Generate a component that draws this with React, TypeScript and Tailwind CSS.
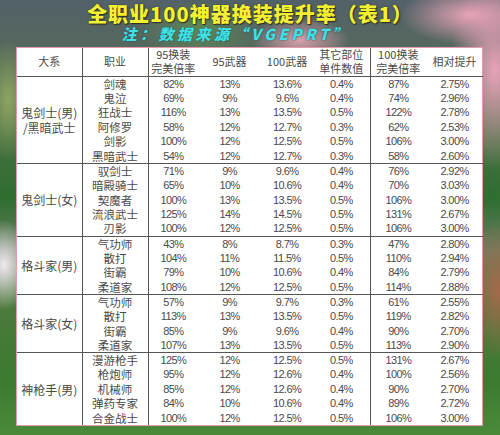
type Row = [string, string, string, string, string, string, string];

interface Group {
  label: string[];
  rows: Row[];
}

const groups: Group[] = [
  {
    label: ['鬼剑士(男)', '/黑暗武士'],
    rows: [
      ['剑魂', '82%', '13%', '13.6%', '0.4%', '87%', '2.75%'],
      ['鬼泣', '69%', '9%', '9.6%', '0.4%', '74%', '2.96%'],
      ['狂战士', '116%', '13%', '13.5%', '0.5%', '122%', '2.78%'],
      ['阿修罗', '58%', '12%', '12.7%', '0.3%', '62%', '2.53%'],
      ['剑影', '100%', '12%', '12.5%', '0.5%', '106%', '3.00%'],
      ['黑暗武士', '54%', '12%', '12.7%', '0.3%', '58%', '2.60%'],
    ],
  },
  {
    label: ['鬼剑士(女)'],
    rows: [
      ['驭剑士', '71%', '9%', '9.6%', '0.4%', '76%', '2.92%'],
      ['暗殿骑士', '65%', '10%', '10.6%', '0.4%', '70%', '3.03%'],
      ['契魔者', '100%', '13%', '13.5%', '0.5%', '106%', '3.00%'],
      ['流浪武士', '125%', '14%', '14.5%', '0.5%', '131%', '2.67%'],
      ['刃影', '100%', '12%', '12.5%', '0.5%', '106%', '3.00%'],
    ],
  },
  {
    label: ['格斗家(男)'],
    rows: [
      ['气功师', '43%', '8%', '8.7%', '0.3%', '47%', '2.80%'],
      ['散打', '104%', '11%', '11.5%', '0.5%', '110%', '2.94%'],
      ['街霸', '79%', '10%', '10.6%', '0.4%', '84%', '2.79%'],
      ['柔道家', '108%', '12%', '12.5%', '0.5%', '114%', '2.88%'],
    ],
  },
  {
    label: ['格斗家(女)'],
    rows: [
      ['气功师', '57%', '9%', '9.7%', '0.3%', '61%', '2.55%'],
      ['散打', '113%', '13%', '13.5%', '0.5%', '119%', '2.82%'],
      ['街霸', '85%', '9%', '9.6%', '0.4%', '90%', '2.70%'],
      ['柔道家', '107%', '13%', '13.5%', '0.5%', '113%', '2.90%'],
    ],
  },
  {
    label: ['神枪手(男)'],
    rows: [
      ['漫游枪手', '125%', '12%', '12.5%', '0.5%', '131%', '2.67%'],
      ['枪炮师', '95%', '12%', '12.6%', '0.4%', '100%', '2.56%'],
      ['机械师', '85%', '12%', '12.6%', '0.4%', '90%', '2.70%'],
      ['弹药专家', '84%', '10%', '10.6%', '0.4%', '89%', '2.72%'],
      ['合金战士', '100%', '12%', '12.5%', '0.5%', '106%', '3.00%'],
    ],
  },
];

const cjk = "font-['Noto_Sans_CJK_SC','Noto_Sans',sans-serif]";
const num = "font-['Liberation_Sans','Noto_Sans_CJK_SC',sans-serif] text-[11px] tracking-[-0.6px]";

export default function App() {
  return (
    <div className="w-[500px] h-[435px] overflow-hidden flex flex-col bg-[radial-gradient(ellipse_45px_100px_at_495px_70px,#eaa2ba,transparent),radial-gradient(ellipse_70px_30px_at_470px_15px,#e7a3b6,transparent),radial-gradient(ellipse_50px_22px_at_300px_40px,#d9a0ac,transparent),radial-gradient(ellipse_60px_30px_at_200px_30px,#5f8a55,transparent),radial-gradient(ellipse_30px_70px_at_498px_290px,#a5694a,transparent),radial-gradient(ellipse_30px_45px_at_4px_265px,#f0eaf0,transparent),radial-gradient(ellipse_25px_60px_at_8px_100px,#8fa463,transparent),linear-gradient(180deg,#536169_0px,#55685e_45px,#4b7145_120px,#2f6e30_200px,#6a7e62_250px,#4b7a3c_310px,#3b7a2f_380px,#4c8a3a_435px)]">
      <div className="h-[47px] flex flex-col items-center pt-[3px]">
        <div
          className={`${cjk} font-black text-[20px] leading-[22px] tracking-[1px] text-[#f2f032] [text-shadow:0_0_2px_#3a3a20,1px_1px_1px_#2b2b1a]`}
        >
          全职业100神器换装提升率（表1）
        </div>
        <div
          className={`${cjk} font-black italic text-[15px] leading-[17px] text-[#3fe0e6] tracking-[3.5px] -ml-[28px] [text-shadow:0_0_2px_#1f4a50]`}
        >
          注：数据来源“VGEPRT”
        </div>
      </div>

      <div className="ml-[16px] w-[467px] border-[1.5px] border-[#e79aae] bg-white">
        <table className="w-full table-fixed border-collapse text-[#4a4a4a]">
          <colgroup>
            <col className="w-[65px]" />
            <col className="w-[66px]" />
            <col className="w-[50px]" />
            <col className="w-[63px]" />
            <col className="w-[52px]" />
            <col className="w-[57px]" />
            <col className="w-[56px]" />
            <col className="w-[57px]" />
          </colgroup>
          <thead>
            <tr className={`${cjk} text-[11px] leading-[13.5px] h-[28px] border-b border-[#555]`}>
              <th className="font-normal border-r border-[#555]">大系</th>
              <th className="font-normal border-r border-[#555]">职业</th>
              <th className="font-normal">
                <div>95换装</div>
                <div>完美倍率</div>
              </th>
              <th className="font-normal">95武器</th>
              <th className="font-normal">100武器</th>
              <th className="font-normal border-r border-[#555]">
                <div>其它部位</div>
                <div>单件数值</div>
              </th>
              <th className="font-normal">
                <div>100换装</div>
                <div>完美倍率</div>
              </th>
              <th className="font-normal">相对提升</th>
            </tr>
          </thead>
          <tbody>
            {groups.map((g, gi) =>
              g.rows.map((r, ri) => (
                <tr
                  key={`${gi}-${ri}`}
                  className={`h-[14.55px] ${ri === 0 && gi > 0 ? 'border-t border-[#555]' : ''}`}
                >
                  {ri === 0 && (
                    <td
                      rowSpan={g.rows.length}
                      className={`${cjk} text-[12px] leading-[15px] text-center border-r border-[#555] p-0`}
                    >
                      {g.label.map((l) => (
                        <div key={l}>{l}</div>
                      ))}
                    </td>
                  )}
                  <td className={`${cjk} text-[11.5px] leading-[14px] text-center border-r border-[#555] p-0`}>
                    {r[0]}
                  </td>
                  <td className={`${num} leading-[14px] text-center p-0`}>{r[1]}</td>
                  <td className={`${num} leading-[14px] text-center p-0`}>{r[2]}</td>
                  <td className={`${num} leading-[14px] text-center p-0`}>{r[3]}</td>
                  <td className={`${num} leading-[14px] text-center p-0 border-r border-[#555]`}>{r[4]}</td>
                  <td className={`${num} leading-[14px] text-center p-0`}>{r[5]}</td>
                  <td className={`${num} leading-[14px] text-center p-0`}>{r[6]}</td>
                </tr>
              ))
            )}
          </tbody>
        </table>
      </div>
    </div>
  );
}
